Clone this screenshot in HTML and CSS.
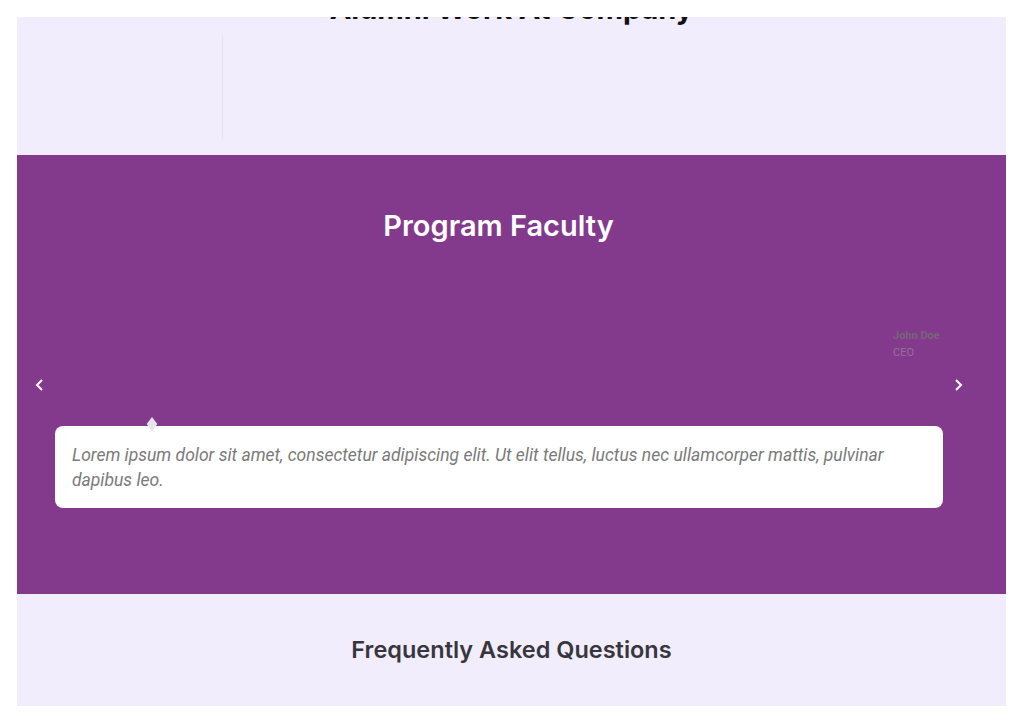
FILE: index.html
```html
<!DOCTYPE html>
<html lang="en">
<head>
  <meta charset="UTF-8" />
  <meta name="viewport" content="width=device-width, initial-scale=1.0"/>
  <title>Program Faculty</title>
  <link rel="stylesheet" href="styles.css">
</head>

<body>
  <div class="page">
    <section class="alumni">
      <h2>Alumni Work At Company</h2>
      <div class="logos">
        <div class="logo-cell"></div>
        <div class="logo-cell divided"></div>
      </div>
    </section>

    <section class="faculty">
      <h2>Program Faculty</h2>
      <div class="carousel">
        <button class="arrow arrow-prev" aria-label="Previous">
          <svg width="10" height="14" viewBox="0 0 10 14"><polyline points="7,2 2,7 7,12" fill="none" stroke="white" stroke-width="2"/></svg>
        </button>
        <div class="slide">
          <div class="author">
            <div class="author-name">John Doe</div>
            <div class="author-role">CEO</div>
          </div>
          <div class="quote">
            <p>Lorem ipsum dolor sit amet, consectetur adipiscing elit. Ut elit tellus, luctus nec ullamcorper mattis, pulvinar dapibus leo.</p>
          </div>
        </div>
        <button class="arrow arrow-next" aria-label="Next">
          <svg width="10" height="14" viewBox="0 0 10 14"><polyline points="3,2 8,7 3,12" fill="none" stroke="white" stroke-width="2"/></svg>
        </button>
      </div>
    </section>

    <section class="faq">
      <h2>Frequently Asked Questions</h2>
    </section>
  </div>
</body>
</html>
```

FILE: styles.css
```css
* {margin: 0; padding: 0; box-sizing: border-box;}
body {
  font-family: "Roboto", "Liberation Sans", sans-serif;
  background: white;
}

.page {
  margin: 17px 18px 17px 17px;
  height: 689px;
  overflow: hidden;
}

.alumni {
  background: #f2edfc;
  height: 165px;
  margin-top: -27px;
  text-align: center;
}
.alumni h2 {
  font-family: "Inter", sans-serif;
  font-weight: 700;
  font-size: 29px;
  line-height: 38px;
  color: #111;
}
.logos {
  display: flex;
  height: 105px;
  margin-top: 7px;
}
.logo-cell {
  width: 205px;
}
.logo-cell.divided {
  border-left: 1px solid #e9e4f4;
}

.faculty {
  background: #843a8c;
  height: 439px;
  padding-top: 53px;
}
.faculty h2 {
  font-family: "Inter", sans-serif;
  font-weight: 600;
  font-size: 29px;
  line-height: 36px;
  color: white;
  text-align: center;
  padding-right: 26px;
}

.carousel {
  position: relative;
  padding: 0 63px 0 38px;
  margin-top: 83px;
}
.arrow {
  position: absolute;
  top: 51px;
  background: none;
  border: none;
  width: 14px;
  height: 14px;
  display: flex;
  align-items: center;
  justify-content: center;
}
.arrow-prev { left: 16px; }
.arrow-next { right: 41px; }

.slide {
  display: flex;
  flex-direction: column;
}
.author {
  align-self: flex-end;
  width: 50px;
  font-size: 11px;
  line-height: 17px;
}
.author-name {
  font-weight: 700;
  color: #76657a;
}
.author-role {
  color: #95709a;
}

.quote {
  position: relative;
  margin-top: 65px;
  background: white;
  border-radius: 8px;
  padding: 17px 17px 15px;
}
.quote::before {
  content: "";
  position: absolute;
  top: -7px;
  left: 92px;
  width: 10px;
  height: 10px;
  background: #e6e4ec;
  transform: scaleX(0.75) rotate(45deg);
}
.quote p {
  font-style: italic;
  font-size: 17.5px;
  line-height: 25px;
  color: #7a7a7a;
}

.faq {
  background: #f2edfc;
  height: 130px;
  padding-top: 40px;
  text-align: center;
}
.faq h2 {
  font-family: "Inter", sans-serif;
  font-weight: 600;
  font-size: 23.5px;
  line-height: 32px;
  color: #38363d;
}
```
